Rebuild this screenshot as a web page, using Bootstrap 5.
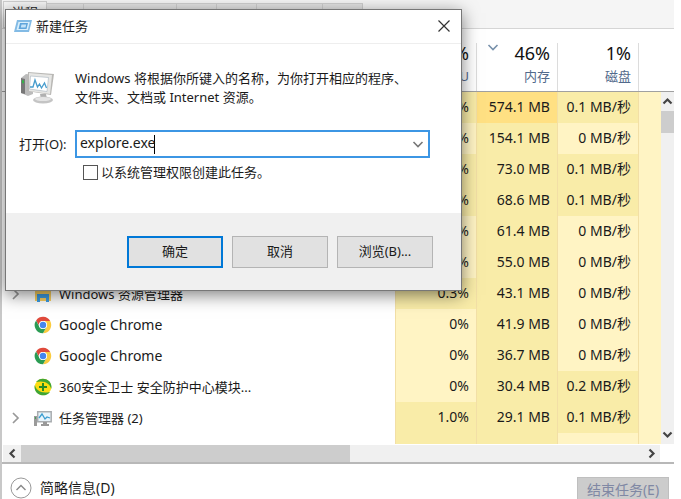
<!DOCTYPE html>
<html lang="zh-CN">
<head>
<meta charset="utf-8">
<meta name="viewport" content="width=device-width, initial-scale=1">
<title>任务管理器</title>
<link href="https://cdn.jsdelivr.net/npm/bootstrap@5.3.0/dist/css/bootstrap.min.css" rel="stylesheet">
<style>
body{font-family:"Noto Sans","Noto Sans CJK SC",sans-serif;font-size:13px;line-height:18px;color:#1a1a1a;background:#fff}
button{font:inherit;color:inherit;padding:0;border:0;background:none}
.manager{height:100vh;margin-right:7px;border-left:2px solid #c8c8c8}
.tabstrip{height:29px;background:#f5f5f5;border-bottom:1px solid #d5d5d5;padding-left:1px}
.tabstrip button{height:25px;background:#e4e4e4;border:1px solid #cfcfcf;border-left:0}
.tabstrip .current{height:27px;width:44px;padding-bottom:6px;background:#f6f6f6;border-left:1px solid #cfcfcf}
.w-a{width:37px}.w-b{width:93px}.w-c{width:40px}.w-d{width:66px}
.proc{width:100%;table-layout:fixed;border-collapse:separate;border-spacing:0}
.proc th{height:63px;padding:12px 7px 0;text-align:right;vertical-align:top;font-weight:400;border-bottom:1px solid #a0a0a0;color:#526a8c}
.proc th+th{background:linear-gradient(#dcdcdc,#dcdcdc) 0 100%/1px 48px no-repeat}
.proc th strong{display:block;font-size:18px;line-height:24px;font-weight:400;color:#111}
.proc th small{display:block;font-size:13px;line-height:22px}
.proc td{height:31px;padding:0 7px 2px 0;font-size:14px;text-align:right;white-space:nowrap;background:#fff4c4}
.proc td+td{border-left:1px solid #f2dfa6}
.proc td:first-child{background:#fff;padding:0 0 0 7px;text-align:left}
.proc .m{background:#f9eca8}
.proc .h{background:#ffe083}
.c-num{width:81px}.c-end{width:23px}
.zh{font-size:13px}
.exp{width:14px}.pic{width:18px;margin:0 7px 0 11px}
.vbar{width:13px;background:#f0f0f0}
.vbar .headspace{height:63px;background:#fff;border-bottom:1px solid #a0a0a0}
.vbar .thumb{height:22px;background:#cdcdcd}
.arrow{height:19px}
.hbar{height:17px;background:#f0f0f0;margin:1px 14px 0 1px}
.hbar .thumb{width:50%;background:#cdcdcd}
.hbar button{width:18px}
.foot{height:37px;font-size:14px;border-top:2px solid #b8b8b8;padding:13px 5px 0 8px;overflow:hidden}
.foot a{color:#1a1a1a}
.endtask{width:92px;height:26px;background:#ccc;border:1px solid #bfbfbf;color:#8088a4}
.dlg{position:absolute;left:5px;top:9px;width:457px;background:#fff;border:1px solid #777;box-shadow:0 4px 16px rgba(0,0,0,.5)}
.dlg-title{height:34px;border-bottom:1px solid #eee;padding:0 10px 2px 8px}
.dlg-main{padding:25px 31px 32px 13px}
.msg{padding-left:16px;line-height:19px}
.fields{margin-top:23px}
.combo{border:2px solid #3c96e4;height:28px}
.combo input{min-width:0;border:0;outline:0;padding:0 3px 2px;font-size:14px;color:#1a1a1a;background:linear-gradient(#000,#000) 77px 50%/1px 19px no-repeat}
.combo button{width:20px}
.openlabel{width:56px}
.elev{padding:5px 0 0 64px}
.elev input{appearance:none;width:15px;height:15px;border:1px solid #555;background:#fff;margin:0 3px 0 0}
.dlg-foot{height:77px;background:#f0f0f0;gap:9px;padding:0 28px 0 0}
.dlg-foot button{width:96px;height:32px;padding-bottom:2px;background:#e1e1e1;border:1px solid #b4b4b4}
.dlg-foot .go{border:2px solid #0078d7}
</style>
<script src="https://cdn.jsdelivr.net/npm/bootstrap@5.3.0/dist/js/bootstrap.bundle.min.js"></script>
</head>
<body class="overflow-hidden">
<svg class="d-none">
<symbol id="chrome" viewBox="0 0 18 18"><path fill="#e04a3b" d="M2.1 4.4A8.2 8.2 0 0 1 16.2 5H9a4 4 0 0 0-3.6 2.2L4.6 9z"/><path fill="#fbcb3f" d="M16.2 5A8.2 8.2 0 0 1 9 17.2L12.5 11a4 4 0 0 0-3.5-6z"/><path fill="#2b9c53" d="M2.1 4.4A8.2 8.2 0 0 0 9 17.2l3.5-6.2a4 4 0 0 1-7 0z"/><circle cx="9" cy="9" r="4" fill="#fff"/><circle cx="9" cy="9" r="3.2" fill="#4486ee"/></symbol>
<symbol id="right" viewBox="0 0 14 14"><path d="M4 2l5 5-5 5" fill="none" stroke="#999" stroke-width="1.7"/></symbol>
<symbol id="down" viewBox="0 0 12 12"><path d="M1.500 4L6 8.500 10.500 4" fill="none" stroke="currentColor" stroke-width="1.600"/></symbol>
</svg>
<main class="manager d-flex flex-column overflow-hidden">
<nav class="tabstrip d-flex align-items-end flex-shrink-0" aria-label="选项卡">
<button class="current">进程</button><button class="w-a" aria-label="性能"></button><button class="w-b" aria-label="应用历史记录"></button><button class="w-c" aria-label="启动"></button><button class="w-c" aria-label="用户"></button><button class="w-d" aria-label="详细信息"></button><button class="w-c" aria-label="服务"></button>
</nav>
<div class="d-flex flex-grow-1 overflow-hidden position-relative">
<div class="flex-grow-1 overflow-hidden">
<table class="proc">
<colgroup><col><col class="c-num"><col class="c-num"><col class="c-num"><col class="c-end"></colgroup>
<thead><tr><th></th><th><strong>2%</strong><small>CPU</small></th><th><div class="d-flex justify-content-between align-items-start"><svg class="ms-1" width="12" height="12" color="#7891ab" aria-hidden="true"><use href="#down"/></svg><div><strong>46%</strong><small>内存</small></div></div></th><th><strong>1%</strong><small>磁盘</small></th><th></th></tr></thead>
<tbody>
<tr><td></td><td class="m">0.7%</td><td class="h">574.1 MB</td><td class="m">0.1 MB/秒</td><td></td></tr>
<tr><td></td><td>0%</td><td class="m">154.1 MB</td><td>0 MB/秒</td><td></td></tr>
<tr><td></td><td class="m">0.1%</td><td class="m">73.0 MB</td><td class="m">0.1 MB/秒</td><td></td></tr>
<tr><td></td><td class="m">0.1%</td><td class="m">68.6 MB</td><td class="m">0.1 MB/秒</td><td></td></tr>
<tr><td></td><td>0%</td><td class="m">61.4 MB</td><td>0 MB/秒</td><td></td></tr>
<tr><td></td><td>0%</td><td class="m">55.0 MB</td><td>0 MB/秒</td><td></td></tr>
<tr><td><div class="d-flex align-items-center"><svg class="exp" height="14"><use href="#right"/></svg><svg class="pic" height="18" viewBox="0 0 18 18"><path fill="#d9a328" d="M1 3h6l1 2H1z"/><path fill="#f8cf61" d="M1 4h16v12H1z"/><path fill="#3d9be0" d="M3 9h12v8h-3v-4H6v4H3z"/></svg><span class="zh">Windows 资源管理器</span></div></td><td class="m">0.3%</td><td class="m">43.1 MB</td><td>0 MB/秒</td><td></td></tr>
<tr><td><div class="d-flex align-items-center"><span class="exp"></span><svg class="pic" height="18"><use href="#chrome"/></svg><span>Google Chrome</span></div></td><td>0%</td><td class="m">41.9 MB</td><td>0 MB/秒</td><td></td></tr>
<tr><td><div class="d-flex align-items-center"><span class="exp"></span><svg class="pic" height="18"><use href="#chrome"/></svg><span>Google Chrome</span></div></td><td>0%</td><td class="m">36.7 MB</td><td>0 MB/秒</td><td></td></tr>
<tr><td><div class="d-flex align-items-center"><span class="exp"></span><svg class="pic" height="18" viewBox="0 0 18 18"><circle cx="9" cy="9" r="8.300" fill="#fbdc11"/><path fill="#3fa535" d="M2 4C5 0 11-.5 15 3c2 2 3 5 2.200 8C16 6 11 2 2 4zM16 14c-3 4-9 4.500-13 1C1 13 0 10 .8 7 2 12 7 16 16 14z"/><path d="M9 5v8M5 9h8" stroke="#268b27" stroke-width="2"/></svg><span class="zh">360安全卫士 安全防护中心模块...</span></div></td><td>0%</td><td class="m">30.4 MB</td><td class="m">0.2 MB/秒</td><td></td></tr>
<tr><td><div class="d-flex align-items-center"><svg class="exp" height="14"><use href="#right"/></svg><svg class="pic" height="18" viewBox="0 0 18 18"><path fill="#9a9a9a" d="M0 7h3v10H0z"/><path fill="#46a058" d="M1 8h1v2H1z"/><path fill="#e8f4fb" stroke="#a9adb0" stroke-width="1.500" d="M3.700 2.700h13.500v10H3.700z"/><path fill="none" stroke="#3a9dd0" stroke-width="1.300" d="M5 9l3-4 3 5 2-2 3 1"/><path fill="#999" d="M9 13h4v2h2v2H7v-2h2z"/></svg><span class="zh">任务管理器 (2)</span></div></td><td class="m">1.0%</td><td class="m">29.1 MB</td><td class="m">0.1 MB/秒</td><td></td></tr>
<tr><td></td><td class="m"></td><td class="m"></td><td></td><td></td></tr>
</tbody>
</table>
</div>
<div class="vbar d-flex flex-column flex-shrink-0">
<div class="headspace"></div>
<button class="arrow" aria-label="向上滚动"><svg class="d-block mx-auto" width="11" height="11" viewBox="0 0 11 11"><path d="M1.500 7.500l4-4 4 4" fill="none" stroke="#444" stroke-width="2.200"/></svg></button>
<div class="thumb"></div>
<button class="arrow mt-auto" aria-label="向下滚动"><svg class="d-block mx-auto" width="11" height="11" viewBox="0 0 11 11"><path d="M1.500 3.500l4 4 4-4" fill="none" stroke="#444" stroke-width="2.200"/></svg></button>
</div>
</div>
<div class="hbar d-flex flex-shrink-0">
<button aria-label="向左滚动"><svg class="d-block mx-auto" width="11" height="11" viewBox="0 0 11 11"><path d="M7.500 1.500l-4 4 4 4" fill="none" stroke="#444" stroke-width="2.200"/></svg></button>
<div class="thumb"></div>
<button class="ms-auto" aria-label="向右滚动"><svg class="d-block mx-auto" width="11" height="11" viewBox="0 0 11 11"><path d="M3.500 1.500l4 4-4 4" fill="none" stroke="#444" stroke-width="2.200"/></svg></button>
</div>
<footer class="foot d-flex justify-content-between align-items-start flex-shrink-0">
<a href="#" class="d-flex align-items-center text-decoration-none gap-2"><svg width="22" height="22" viewBox="0 0 22 22"><circle cx="11" cy="11" r="10" fill="#fff" stroke="#999"/><path d="M6.500 13L11 8.500l4.500 4.500" fill="none" stroke="#888" stroke-width="1.400"/></svg><span>简略信息(D)</span></a>
<button class="endtask" disabled>结束任务(E)</button>
</footer>
</main>
<section class="dlg" role="dialog" aria-labelledby="dlg-name">
<header class="dlg-title d-flex align-items-center">
<svg width="18" height="14" viewBox="0 0 18 14" aria-hidden="true"><path fill="#83bbe5" d="M3 1h15l-3 12H0z"/><path fill="#d9effc" d="M4.500 3h11.300l-2 8H2.500z"/><path fill="#5fa5db" d="M6 4h8l-1.500 6h-8z"/><path fill="#c5e4f9" d="M7.500 5.500h4.700l-.7 3H6.800z"/></svg>
<span id="dlg-name" class="ms-1">新建任务</span>
<button class="ms-auto" aria-label="关闭"><svg class="d-block" width="14" height="14" viewBox="0 0 14 14"><path d="M1.500 1.500l11 11m0-11l-11 11" stroke="#333" stroke-width="1.200"/></svg></button>
</header>
<div class="dlg-main">
<div class="d-flex align-items-start">
<svg width="36" height="36" viewBox="0 0 36 36" aria-hidden="true"><path fill="#bbb" d="M2 9l5-4 7 1v19l-5 2-7-3z"/><path fill="#777" d="M2 9l4 1v15l-4-1z"/><path fill="#36b249" d="M3 11l2 .5v3L3 14z"/><path fill="#b9b8b5" d="M9 3l26 2-3 21-24-4z"/><path fill="#e6e6e4" d="M10 4l23 2-2 19-21-3z"/><path fill="#fff" stroke="#a8b4bd" stroke-width=".6" d="M11.500 7l18 1.500-1.500 14L10.500 20z"/><path fill="none" stroke="#469ccd" stroke-width="1.300" d="M11 18l3 0 2-7 2.500 7 2-3 2 4 3-5 2 5"/><path fill="#b0b0b0" d="M21 25h6l1 5h-6z"/><ellipse cx="24" cy="31" rx="10" ry="3.500" fill="#c4c4c4"/><ellipse cx="24" cy="30" rx="8" ry="2" fill="#e4e4e4"/></svg>
<div class="msg flex-grow-1 ms-1">Windows 将根据你所键入的名称，为你打开相应的程序、<br>文件夹、文档或 Internet 资源。</div>
</div>
<div class="fields d-flex align-items-center">
<label class="openlabel flex-shrink-0" for="cmd">打开(O):</label>
<div class="combo d-flex flex-grow-1"><input id="cmd" class="flex-grow-1" type="text" value="explore.exe" spellcheck="false"><button aria-label="历史记录"><svg class="d-block mx-auto" width="12" height="12" color="#777"><use href="#down"/></svg></button></div>
</div>
<div class="elev d-flex align-items-center"><input type="checkbox" id="adm"><label for="adm">以系统管理权限创建此任务。</label></div>
</div>
<footer class="dlg-foot d-flex align-items-center justify-content-end"><button class="go">确定</button><button>取消</button><button>浏览(B)...</button></footer>
</section>
</body>
</html>
